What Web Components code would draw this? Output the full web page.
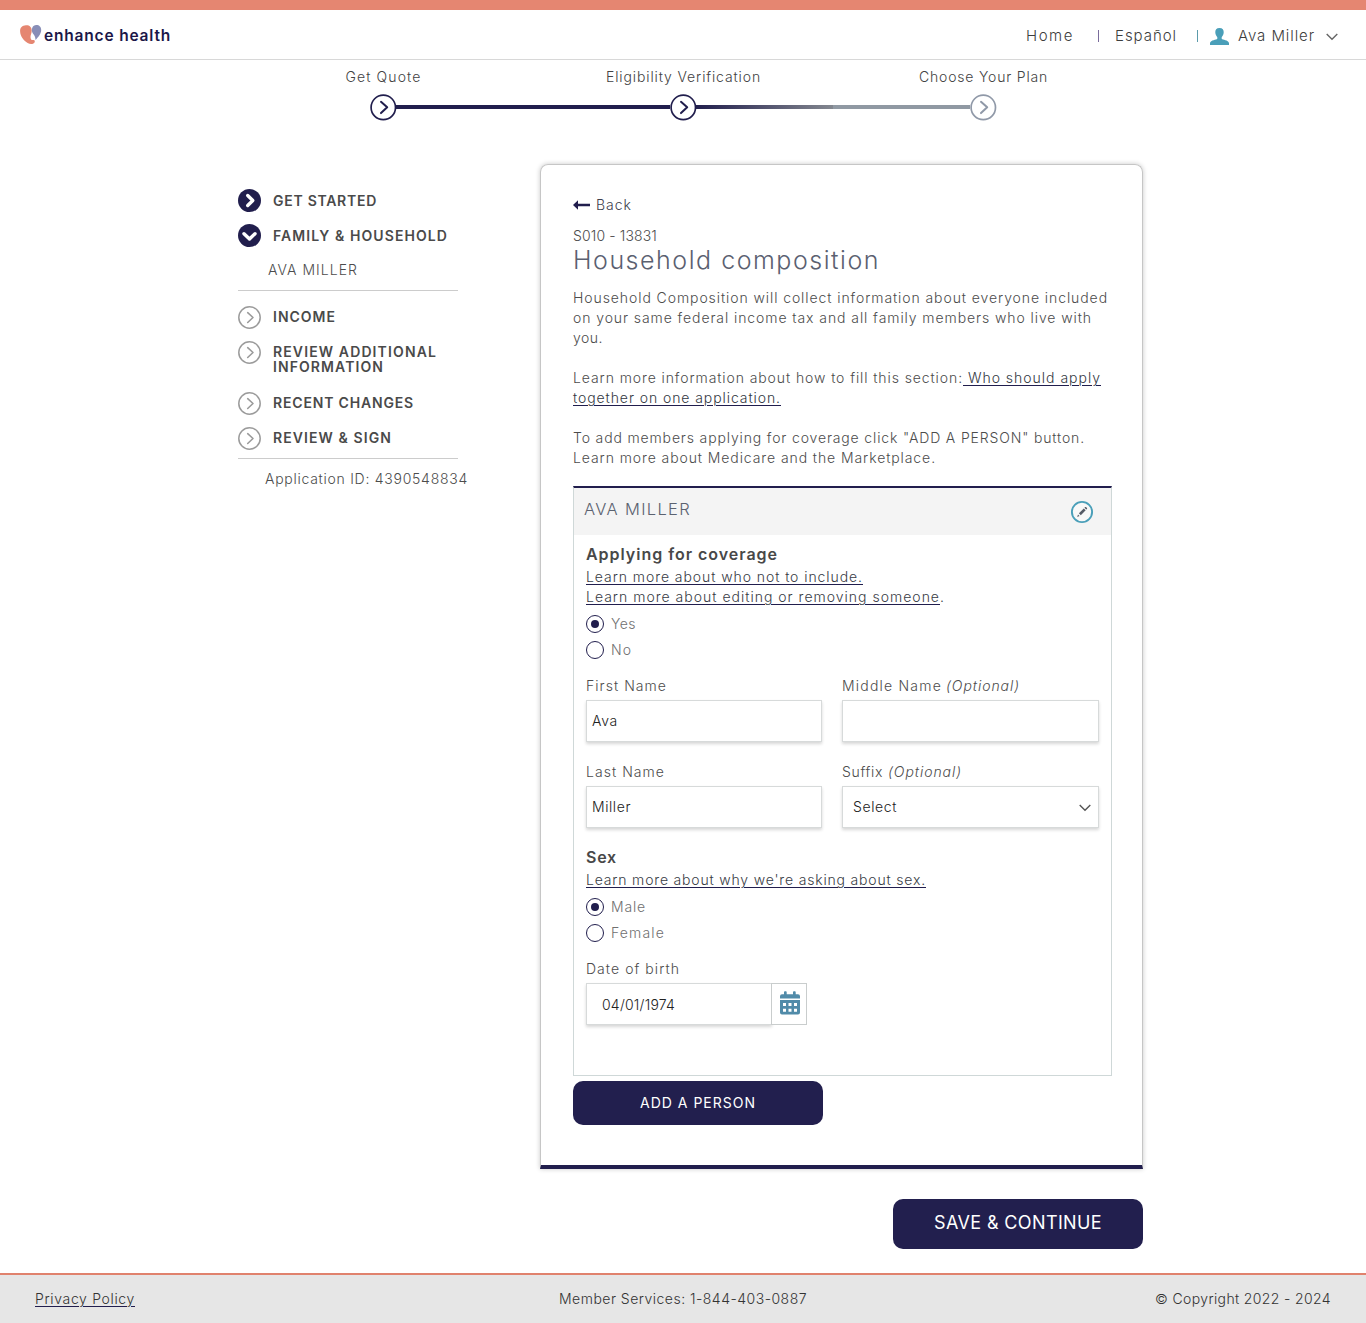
<!DOCTYPE html>
<html lang="en">
<head>
<meta charset="utf-8">
<title>Enhance Health - Household composition</title>
<style>
html,body{margin:0;padding:0}
body{font-family:Inter,"Open Sans","Liberation Sans",sans-serif;font-size:14px;font-weight:300;line-height:20px;color:#4c4c4c;background:#fff;--navy:#211e4d;--coral:#e58671;--teal:#4a9fb9}
</style>
</head>
<body>
<enroll-page></enroll-page>
<script>
class Base extends HTMLElement{
  connectedCallback(){
    if(this.shadowRoot)return;
    this.attachShadow({mode:'open'}).innerHTML='<style>*{box-sizing:border-box}</style>'+this.render();
  }
  a(n){return this.getAttribute(n)||''}
}
/* one line of text, tracked so that it spans the width given in "w" */
class FitText extends HTMLElement{
  connectedCallback(){
    if(this.shadowRoot)return;
    this.attachShadow({mode:'open'}).innerHTML=`<style>:host{display:inline-block;white-space:pre}:host([link]) span{text-decoration:underline;text-decoration-color:var(--navy);text-decoration-thickness:1px;text-underline-offset:2px}</style><span><slot></slot></span>`;
    const w=+this.getAttribute('w');
    if(!w)return;
    const s=this.shadowRoot.querySelector('span'),n=this.textContent.length;
    const sp=(w-s.getBoundingClientRect().width)/n;
    s.style.letterSpacing=sp+'px';
  }
}
class SiteHeader extends Base{render(){return `
<style>
:host{display:block;border-top:10px solid var(--coral);border-bottom:1px solid #d8d8d8;height:60px;box-sizing:border-box;color:#3d3d3d}
.row{display:flex;height:49px;padding:3px 28px 0 20px;align-items:center;font-size:15px}
.logo{color:#1b1748;font-weight:600;font-size:15.5px;margin-left:2px}
nav{display:flex;align-items:center;margin-left:auto}
i{width:1px;height:12px;background:#7a6c9c}
svg{display:block}
.heart{margin-top:-3px}
</style>
<div class="row">
<svg class="heart" width="22" height="20" viewBox="0 0 22 20"><path fill="#e58671" d="M6 .2C9.500 0 11.700 2 11.700 5.600C11.800 8 10.600 9.700 10.500 12C10.500 14.300 11.600 15.400 13 15C14.500 14.700 15.100 15.500 14.700 17C13.800 19.300 10.500 19.700 7.600 18C4 15.800 .2 11.500 .1 6.300C0 2.600 2.200 .3 6 .2Z"/><path fill="#888eb7" d="M16.300 .1C19.400 .1 21.200 2.200 21.200 5C21.200 8.800 18 12.500 15.600 14.900C15.300 11.500 14.300 10.200 12.900 8.500C11.500 6.500 11.700 4.300 12.300 2.700C13 1 14.500 .1 16.300 .1Z"/></svg>
<fit-text class="logo" w="127">enhance health</fit-text>
<nav><fit-text w="48">Home</fit-text><i style="margin:0 16px 0 24px"></i><fit-text w="62">Español</fit-text><i style="margin:0 12px 0 20px;background:#5b9bab"></i>
<svg width="19" height="17" viewBox="0 0 19 17"><path fill="#4a9fb9" d="M9.500 0C12.600 0 13.900 1.900 13.700 4.600C13.600 7 12.500 8 11.700 9.300V10.800C12.500 12 18.300 12 19 15V17H0V15C.7 12 6.500 12 7.300 10.800V9.300C6.500 8 5.400 7 5.300 4.600C5.100 1.900 6.400 0 9.500 0Z"/></svg>
<fit-text w="77" style="margin-left:9px">Ava Miller</fit-text>
<svg style="margin:2px 0 0 11px" width="12" height="8" viewBox="0 0 12 8"><path fill="none" stroke="#666" stroke-width="1.400" d="M.7 1L6 6.300L11.300 1"/></svg></nav>
</div>`}}
class StepCircle extends Base{render(){return `<style>:host{display:block;width:26px;height:26px}svg{display:block;overflow:visible}</style>
<svg width="26" height="26" viewBox="0 0 26 26" fill="none" stroke="${this.a('color')}"><circle cx="13.300" cy="13.400" r="12.200" stroke-width="1.700"/><path stroke-width="2" stroke-linecap="round" stroke-linejoin="round" d="M11 7.800L17.200 13.300L11 19.100"/></svg>`}}
class ProgressSteps extends Base{render(){return `
<style>:host{display:block;width:900px;margin:7px 0 0 233px}
.l{display:grid;grid-template-columns:repeat(3,300px);justify-items:center;color:#424242}
.l fit-text{margin-left:1px}
.t{display:flex;align-items:center;margin:7px 0 0 137px}
.t b{width:274px;height:4px;background:var(--navy)}
.t b.h{background:linear-gradient(90deg,var(--navy),#83878f 50%,#9099a3 50%)}</style>
<div class="l"><fit-text w="76">Get Quote</fit-text><fit-text w="155">Eligibility Verification</fit-text><fit-text w="129">Choose Your Plan</fit-text></div>
<div class="t"><step-circle color="#211e4d"></step-circle><b></b><step-circle color="#211e4d"></step-circle><b class="h"></b><step-circle color="#9099a8"></step-circle></div>`}}
class NavItem extends Base{render(){
const k=this.a('state');
const ic=k?`<circle cx="11.500" cy="11.500" r="11.500" fill="#211e4d"/><path ${k=='open'?'transform="rotate(90 11.500 11.500)"':''} fill="none" stroke="#fff" stroke-width="3.400" stroke-linecap="round" stroke-linejoin="round" d="${k=='open'?'M9.700 6L15 11.500L9.700 17':'M9.700 6.500L14.800 11.500L9.700 16.500'}"/>`:`<circle cx="11.500" cy="11.500" r="10.700" fill="none" stroke="#9b9b9b" stroke-width="1.500"/><path fill="none" stroke="#9b9b9b" stroke-width="1.600" stroke-linecap="round" stroke-linejoin="round" d="M9.700 6.700L15 11.500L9.700 16.500"/>`;
return `<style>:host{display:flex;gap:12px;height:23px;font-weight:600;font-size:14px;line-height:15px;color:#4a4a4a}:host([two]){height:39px}svg{display:block;flex:none}div{padding-top:${k?4:3}px}::slotted(*){display:block}</style><svg width="23" height="23" viewBox="0 0 23 23">${ic}</svg><div><slot></slot></div>`}}
class SideNav extends Base{render(){return `
<style>:host{display:flex;flex-direction:column;width:230px}
nav-item+nav-item{margin-top:12px}hr{border:0;height:1px;width:220px;background:#ccc;margin:0}</style>
<nav-item state="done"><fit-text w="104">GET STARTED</fit-text></nav-item>
<nav-item state="open"><fit-text w="175">FAMILY &amp; HOUSEHOLD</fit-text></nav-item>
<div style="padding:13px 0 10px 30px"><fit-text w="90">AVA MILLER</fit-text></div>
<hr>
<nav-item style="margin-top:15px"><fit-text w="63">INCOME</fit-text></nav-item>
<nav-item two><fit-text w="164">REVIEW ADDITIONAL</fit-text><fit-text w="111">INFORMATION</fit-text></nav-item>
<nav-item><fit-text w="141">RECENT CHANGES</fit-text></nav-item>
<nav-item><fit-text w="119">REVIEW &amp; SIGN</fit-text></nav-item>
<hr style="margin-top:8px">
<div style="padding:10px 0 0 27px"><fit-text w="203">Application ID: 4390548834</fit-text></div>`}}
class RadioOption extends Base{render(){return `
<style>:host{display:flex;align-items:center;gap:7px;height:26px;color:#707070}
span{width:18px;height:18px;border:1px solid var(--navy);border-radius:50%;display:grid;place-items:center}
:host([checked]) span::before{content:"";width:8px;height:8px;border-radius:50%;background:var(--navy)}</style>
<span></span><fit-text w="${this.a('w')}">${this.a('label')}</fit-text>`}}
class FormField extends Base{render(){return `
<style>:host{display:block}label{display:block;height:24px;white-space:nowrap}
.b{display:flex;align-items:center;justify-content:space-between;height:42px;border:1px solid #d7dada;background:#fff;box-shadow:0 2px 3px rgba(0,0,0,.16);padding:0 7px 0 var(--pad,5px);color:#222;font-weight:350}</style>
<label><slot name="label"></slot></label><div class="b"><slot></slot></div>`}}
class PersonPanel extends Base{render(){return `
<style>:host{display:block;box-sizing:border-box;width:539px;height:590px;border:1px solid #cfd8d8;border-top:2px solid var(--navy)}
header{display:flex;justify-content:space-between;height:47px;padding:12px 17px 0 10px;background:#f4f4f4;font-size:16.500px;color:#5b6270}
.c{padding:9px 12px 0}
.h{font-weight:600;font-size:16px;color:#484848;height:23px}
.g{display:grid;grid-template-columns:236px 257px;column-gap:20px;row-gap:20px;margin-top:13px}
.d{display:flex;align-items:flex-end}
.cal{width:36px;height:42px;border:1px solid #c9cdcd;background:#fff;display:grid;place-items:center;padding:0 0 3px 2px;z-index:1;margin-left:-1px}
div.l{height:20px;color:#383c45}
svg{display:block}
</style>
<header><fit-text w="107" style="margin-top:-1px">AVA MILLER</fit-text><svg width="24" height="24" viewBox="0 0 24 24"><circle cx="12" cy="12" r="10.100" fill="#fff" fill-opacity=".4" stroke="#4a9fb9" stroke-width="1.900"/><path fill="#555b66" d="M7.200 16.900L8 14.600L9.500 16.100ZM8.900 13.300L13.800 8.400L15.700 10.300L10.800 15.200ZM14.400 7.700L15.200 7Q16 6.700 16.600 7.400Q17.400 8.100 17 8.900L16.300 9.600Z"/></svg></header>
<div class="c">
<div class="h"><fit-text w="192">Applying for coverage</fit-text></div>
<div class="l"><fit-text link w="277">Learn more about who not to include.</fit-text></div>
<div class="l"><fit-text link w="354">Learn more about editing or removing someone</fit-text>.</div>
<div style="height:4px"></div>
<radio-option checked label="Yes" w="25"></radio-option><radio-option label="No" w="21"></radio-option>
<div class="g">
<form-field><fit-text slot="label" w="81">First Name</fit-text><fit-text w="26">Ava</fit-text></form-field>
<form-field><span slot="label"><fit-text w="100">Middle Name</fit-text><fit-text w="74" style="margin-left:4px;font-style:italic">(Optional)</fit-text></span></form-field>
<form-field><fit-text slot="label" w="79">Last Name</fit-text><fit-text w="39">Miller</fit-text></form-field>
<form-field style="--pad:10px"><span slot="label"><fit-text w="41">Suffix</fit-text><fit-text w="74" style="margin-left:5px;font-style:italic">(Optional)</fit-text></span><fit-text w="44">Select</fit-text><svg style="margin-top:2px" width="12" height="8" viewBox="0 0 12 8"><path fill="none" stroke="#555" stroke-width="1.400" d="M.7 1L6 6.300L11.300 1"/></svg></form-field>
</div>
<div class="h" style="margin-top:19px"><fit-text w="31">Sex</fit-text></div>
<div class="l"><fit-text link w="340">Learn more about why we're asking about sex.</fit-text></div>
<div style="height:4px"></div>
<radio-option checked label="Male" w="35"></radio-option><radio-option label="Female" w="54"></radio-option>
<div class="d" style="margin-top:13px"><form-field style="width:186px;--pad:15px"><fit-text slot="label" w="94">Date of birth</fit-text><fit-text w="73" style="padding-top:2px">04/01/1974</fit-text></form-field>
<div class="cal"><svg width="20" height="24" viewBox="0 0 20 24"><path fill="#518ba9" d="M4 1.200Q4 .3 4.900 .3H5.900Q6.700 .3 6.700 1.200V3.300H13V1.200Q13 .3 13.900 .3H14.900Q15.700 .3 15.700 1.200V3.300H18Q20 3.300 20 5.300V7.600H0V5.300Q0 3.300 2 3.300H4ZM0 9H20V21.500Q20 23.600 18 23.600H2Q0 23.600 0 21.500Z"/><path fill="#fff" d="M3 12h3v3H3zM8.500 12h3v3h-3zM14 12h3v3h-3zM3 17.700h3v3H3zM8.500 17.700h3v3h-3zM14 17.700h3v3h-3z"/></svg></div></div>
</div>`}}
class AppButton extends Base{render(){return `<style>:host{display:flex;align-items:center;justify-content:center;box-sizing:border-box;width:250px;border-radius:10px;background:#221f4e;color:#fff;font-weight:400}</style><slot></slot>`}}
class AppCard extends Base{render(){return `
<style>:host{display:block;box-sizing:border-box;width:603px;height:1005px;border:1px solid #c6c6c6;border-bottom:4px solid var(--navy);border-radius:8px 8px 0 0;box-shadow:0 0 5px rgba(0,0,0,.22);padding:30px 30px 0 32px}
.back{display:flex;align-items:center;gap:6px;height:20px;color:#3c404c}
.t{font-size:25px;line-height:28px;height:30px;color:#5a6070}
section{margin:12px 0 20px}section div{height:20px;white-space:nowrap}
.k{color:#333842}svg{display:block}</style>
<div class="back"><svg width="17" height="10" viewBox="0 0 17 10"><path fill="#211e4d" d="M5 .3V3.700H17V6.200H5V9.700L0 5Z"/></svg><fit-text w="36">Back</fit-text></div>
<div style="margin-top:11px"><fit-text w="84">S010 - 13831</fit-text></div>
<div class="t"><fit-text w="307">Household composition</fit-text></div>
<section><div><fit-text w="535">Household Composition will collect information about everyone included</fit-text></div><div><fit-text w="519">on your same federal income tax and all family members who live with</fit-text></div><div><fit-text w="30">you.</fit-text></div></section>
<div><fit-text w="390">Learn more information about how to fill this section:</fit-text><fit-text class="k" link w="138">&nbsp;Who should apply</fit-text></div><div><fit-text class="k" link w="208">together on one application.</fit-text></div>
<div style="margin-top:20px"><fit-text w="512">To add members applying for coverage click "ADD A PERSON" button.</fit-text></div><div><fit-text w="363">Learn more about Medicare and the Marketplace.</fit-text></div>
<person-panel style="margin-top:18px"></person-panel>
<app-button style="height:44px;margin-top:5px"><fit-text w="116">ADD A PERSON</fit-text></app-button>`}}
class SiteFooter extends Base{render(){return `
<style>:host{display:grid;grid-template-columns:1fr auto 1fr;align-items:center;height:50px;box-sizing:border-box;padding:0 35px;border-top:2px solid #e0826d;background:#e6e6e6;color:#333}</style>
<fit-text link w="100" style="justify-self:start">Privacy Policy</fit-text><fit-text w="248">Member Services: 1-844-403-0887</fit-text><fit-text w="176" style="justify-self:end">© Copyright 2022 - 2024</fit-text>`}}
class EnrollPage extends Base{render(){return `
<style>:host{display:flex;flex-direction:column;height:1323px}
main{display:flex;gap:72px;padding:44px 0 0 238px}
side-nav{padding-top:25px}
app-button{height:50px;margin:30px 0 24px 893px;padding-bottom:2px;font-size:18px}
</style>
<site-header></site-header><progress-steps></progress-steps>
<main><side-nav></side-nav><app-card></app-card></main>
<app-button><fit-text w="168">SAVE &amp; CONTINUE</fit-text></app-button>
<site-footer></site-footer>`}}
customElements.define('site-header',SiteHeader);
customElements.define('step-circle',StepCircle);
customElements.define('progress-steps',ProgressSteps);
customElements.define('nav-item',NavItem);
customElements.define('side-nav',SideNav);
customElements.define('radio-option',RadioOption);
customElements.define('form-field',FormField);
customElements.define('app-button',AppButton);
customElements.define('person-panel',PersonPanel);
customElements.define('app-card',AppCard);
customElements.define('site-footer',SiteFooter);
customElements.define('enroll-page',EnrollPage);
/* defined last: every ancestor is laid out by the time the widths are measured */
customElements.define('fit-text',FitText);
</script>
</body>
</html>
